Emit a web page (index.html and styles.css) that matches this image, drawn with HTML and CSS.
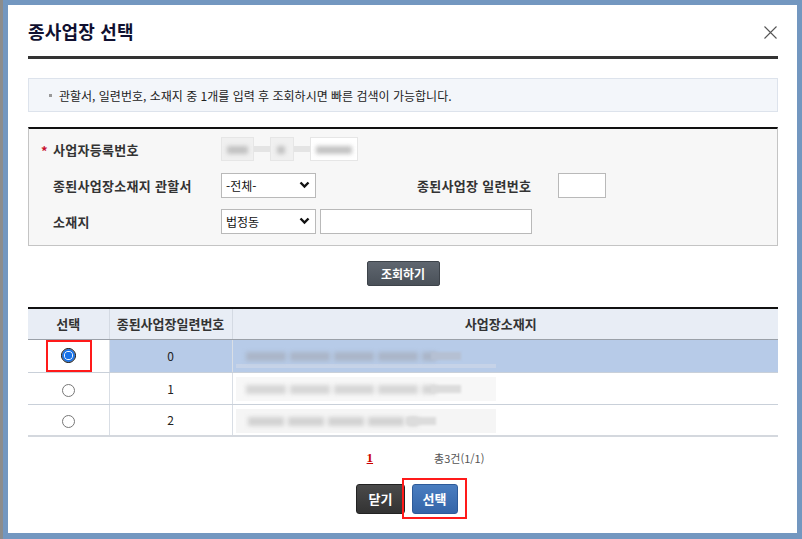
FILE: index.html
```html
<!DOCTYPE html>
<html lang="ko">
<head>
<meta charset="utf-8">
<title>종사업장 선택</title>
<link rel="stylesheet" href="styles.css">
</head>
<body>
<div class="page">
  <div class="left-strip"></div>
  <div class="modal">
    <div class="modal-head">
      <h1 class="title">종사업장 선택</h1>
      <span class="close" aria-label="닫기">
        <svg width="13" height="13" viewBox="0 0 13 13"><path d="M0.5 0.5 L12.5 12.5 M12.5 0.5 L0.5 12.5" stroke="#555" stroke-width="1.1" fill="none"/></svg>
      </span>
    </div>

    <div class="info">
      <span class="bullet"></span>관할서, 일련번호, 소재지 중 1개를 입력 후 조회하시면 빠른 검색이 가능합니다.
    </div>

    <div class="search">
      <div class="row">
        <div class="label req"><span class="star">*</span>사업자등록번호</div>
        <div class="bizno">
          <span class="blur b1"></span><span class="dash"></span><span class="blur b2"></span><span class="dash"></span><span class="blur b3"></span>
        </div>
      </div>
      <div class="row">
        <div class="label">종된사업장소재지 관할서</div>
        <div class="select">-전체-<span class="chev"><svg width="11" height="8" viewBox="0 0 11 8"><path d="M1.5 1.5 L5.5 5.5 L9.5 1.5" stroke="#111" stroke-width="2.4" fill="none"/></svg></span></div>
        <div class="label label2">종된사업장 일련번호</div>
        <div class="input small"></div>
      </div>
      <div class="row">
        <div class="label">소재지</div>
        <div class="select">법정동<span class="chev"><svg width="11" height="8" viewBox="0 0 11 8"><path d="M1.5 1.5 L5.5 5.5 L9.5 1.5" stroke="#111" stroke-width="2.4" fill="none"/></svg></span></div>
        <div class="input wide"></div>
      </div>
    </div>

    <div class="search-btn-wrap"><button class="btn-search">조회하기</button></div>

    <table class="grid">
      <thead>
        <tr><th class="c1">선택</th><th class="c2">종된사업장일련번호</th><th class="c3">사업장소재지</th></tr>
      </thead>
      <tbody>
        <tr class="sel">
          <td class="c1"><span class="hl"><span class="radio on"></span></span></td>
          <td class="c2">0</td>
          <td class="c3"><span class="addr a0"></span></td>
        </tr>
        <tr>
          <td class="c1"><span class="radio"></span></td>
          <td class="c2">1</td>
          <td class="c3"><span class="addr a1"></span></td>
        </tr>
        <tr>
          <td class="c1"><span class="radio"></span></td>
          <td class="c2">2</td>
          <td class="c3"><span class="addr a2"></span></td>
        </tr>
      </tbody>
    </table>

    <div class="paging">
      <a class="pnum">1</a>
      <span class="total">총3건(1/1)</span>
    </div>

    <div class="actions">
      <button class="btn-close">닫기</button>
      <span class="hl2"><button class="btn-ok">선택</button></span>
    </div>
  </div>
</div>
</body>
</html>
```

FILE: styles.css
```css
* { box-sizing: border-box; }
html, body { margin: 0; padding: 0; }
body {
  background: #7397c0;
  font-family: "Noto Sans CJK KR", "Noto Sans", sans-serif;
  font-size: 12px;
  color: #222;
  width: 802px;
  height: 539px;
  overflow: hidden;
}
.page { display: flex; height: 539px; }
.left-strip {
  width: 3px;
  background: #8c8c8c;
  margin-right: 5px;
}
.modal {
  width: 789px;
  height: 528px;
  margin-top: 5px;
  background: #fff;
  padding: 0 19px 0 20px;
  display: flex;
  flex-direction: column;
}
.modal-head {
  height: 54px;
  border-bottom: 3px solid #333;
  display: flex;
  align-items: center;
  justify-content: space-between;
  padding-top: 1px;
}
.title {
  margin: 0;
  font-size: 18px;
  font-weight: 600;
  color: #101030;
  letter-spacing: 0.2px;
}
.close { display: flex; margin-right: 1px; margin-top: 2px; }

.info {
  margin-top: 19px;
  height: 34px;
  background: #f3f6fa;
  border: 1px solid #dde3ec;
  display: flex;
  align-items: center;
  padding-left: 20px;
  font-size: 12px;
  color: #222;
}
.bullet {
  width: 3px; height: 3px; background: #999;
  margin-right: 7px; margin-top: 1px;
}

.search {
  margin-top: 15px;
  height: 119px;
  background: #f7f7f7;
  border: 1px solid #c4c4c4;
  border-top: 2px solid #111;
  padding: 8px 0 0 12px;
  display: flex;
  flex-direction: column;
  gap: 12px;
}
.row { display: flex; align-items: center; height: 24px; }
.label {
  width: 180px;
  padding-left: 12px;
  font-size: 13px;
  font-weight: bold;
  color: #333;
  letter-spacing: 0.3px;
}
.label.req { padding-left: 0; display: flex; align-items: center; }
.star { color: #c8102e; width: 12px; font-size: 13px; margin-top: 2px; }
.bizno { display: flex; align-items: center; height: 24px; }
.blur {
  display: block; height: 24px;
  background: linear-gradient(#f0f0f0, #f0f0f0);
  border: 1px solid #e6e6e6;
  position: relative;
}
.blur::after {
  content: ""; position: absolute; left: 5px; right: 5px; top: 8px; height: 8px;
  background: #bdbdbd; filter: blur(2px); opacity: 0.9;
}
.b1 { width: 33px; }
.b2 { width: 24px; }
.b3 { width: 48px; background: #fff; }
.b2::after { left: 6px; right: 8px; }
.dash { width: 16px; height: 6px; background: #e4e4e4; }

.select {
  width: 95px; height: 25px;
  background: #fff;
  border: 1px solid #b9b9b9;
  display: flex; align-items: center; justify-content: space-between;
  padding: 0 5px 0 4px;
  font-size: 12px; color: #111;
}
.chev { display: flex; }
.label2 { width: 141px; margin-left: 101px; padding-left: 0; }
.input { height: 25px; background: #fff; border: 1px solid #b9b9b9; }
.small { width: 48px; }
.wide { width: 212px; margin-left: 4px; }

.search-btn-wrap { margin-top: 15px; display: flex; justify-content: center; }
.btn-search {
  height: 25px; width: 73px;
  background: linear-gradient(#5f666f, #4a5159);
  border: 1px solid #3d434a;
  border-radius: 2px;
  color: #fff; font-weight: bold; font-size: 12px;
  font-family: inherit;
  padding: 0;
}

.grid {
  margin-top: 21px;
  width: 750px;
  border-collapse: collapse;
  border-top: 2px solid #111;
  font-size: 12px;
}
.grid th {
  height: 31px;
  background: #e8edf5;
  font-weight: bold;
  color: #333;
  font-size: 13px;
  border-bottom: 1px solid #9aa0a8;
  border-left: 1px solid #d4dae3;
}
.grid th.c1 { border-left: none; }
.grid th.c3 { padding-right: 10px; }
.grid td {
  height: 32px;
  text-align: center;
  border-bottom: 1px solid #c9d0d9;
  border-left: 1px solid #d9dee5;
  color: #222;
  padding: 0;
}
.grid td.c1 { border-left: none; }
.c1 { width: 81px; }
.c2 { width: 123px; }
.grid tbody tr:last-child td { border-bottom: 2px solid #d4d8de; }
.grid tr.sel td.c2, .grid tr.sel td.c3 { background: #b7cbe8; }
.grid td.c3 { text-align: left; position: relative; }

.radio {
  display: inline-block; width: 13px; height: 13px; border-radius: 50%;
  border: 1px solid #777; background: #fff; vertical-align: middle;
}
.radio.on {
  border: 2px solid #1a73e8;
  background: radial-gradient(circle, #1a73e8 0 3.5px, #fff 4px);
  outline: 1px solid #000;
  border-radius: 50%;
}
.hl {
  display: inline-flex; align-items: center; justify-content: center;
  width: 46px; height: 32px;
  border: 2px solid #ff1a1a;
  margin-left: 1px;
}

.addr {
  display: block; position: absolute; left: 3px; top: 4px; width: 260px; height: 24px;
}
.addr::before {
  content: ""; position: absolute; left: 10px; top: 8px; width: 190px; height: 9px;
  background: repeating-linear-gradient(90deg, #aab5c8 0 40px, transparent 40px 44px);
  filter: blur(2px);
}
.addr::after {
  content: ""; position: absolute; left: 195px; top: 8px; width: 30px; height: 8px;
  background: #b5c0d3; filter: blur(1px);
}
.a0 { background: linear-gradient(transparent 0 20px, #c6d3e8 20px); }
.a1 { background: #f7f7f7; }
.a1::before { background: repeating-linear-gradient(90deg, #d6d6d6 0 40px, transparent 40px 44px); }
.a1::after { background: #dcdcdc; }
.a2 { background: #f5f5f5; }
.a2::before { width: 170px; left: 12px; background: repeating-linear-gradient(90deg, #d2d2d2 0 36px, transparent 36px 40px); }
.a2::after { left: 170px; width: 30px; background: #dcdcdc; }

.paging {
  margin-top: 13px;
  display: flex; justify-content: center; align-items: center;
  height: 16px;
  padding-left: 45px;
}
.pnum {
  color: #c00; font-weight: bold; font-size: 13px;
  text-decoration: underline; font-family: "Liberation Serif", serif;
}
.total { margin-left: 61px; color: #555; font-size: 11px; }

.actions {
  margin-top: 12px;
  display: flex; justify-content: center; align-items: center;
  padding-left: 17px;
}
.btn-close, .btn-ok {
  height: 30px; padding: 0; border-radius: 3px;
  color: #fff; font-weight: bold; font-size: 13px; font-family: inherit;
}
.btn-close {
  width: 49px;
  background: linear-gradient(#4a4a4a, #333);
  border: 1px solid #222;
  margin-right: -3px;
}
.hl2 {
  display: inline-flex; align-items: center; justify-content: center;
  width: 65px; height: 41px;
  border: 2px solid #ff1a1a;
}
.btn-ok {
  width: 46px;
  background: linear-gradient(#4a7dc0, #3565a8);
  border: 1px solid #2d5a99;
}
```
